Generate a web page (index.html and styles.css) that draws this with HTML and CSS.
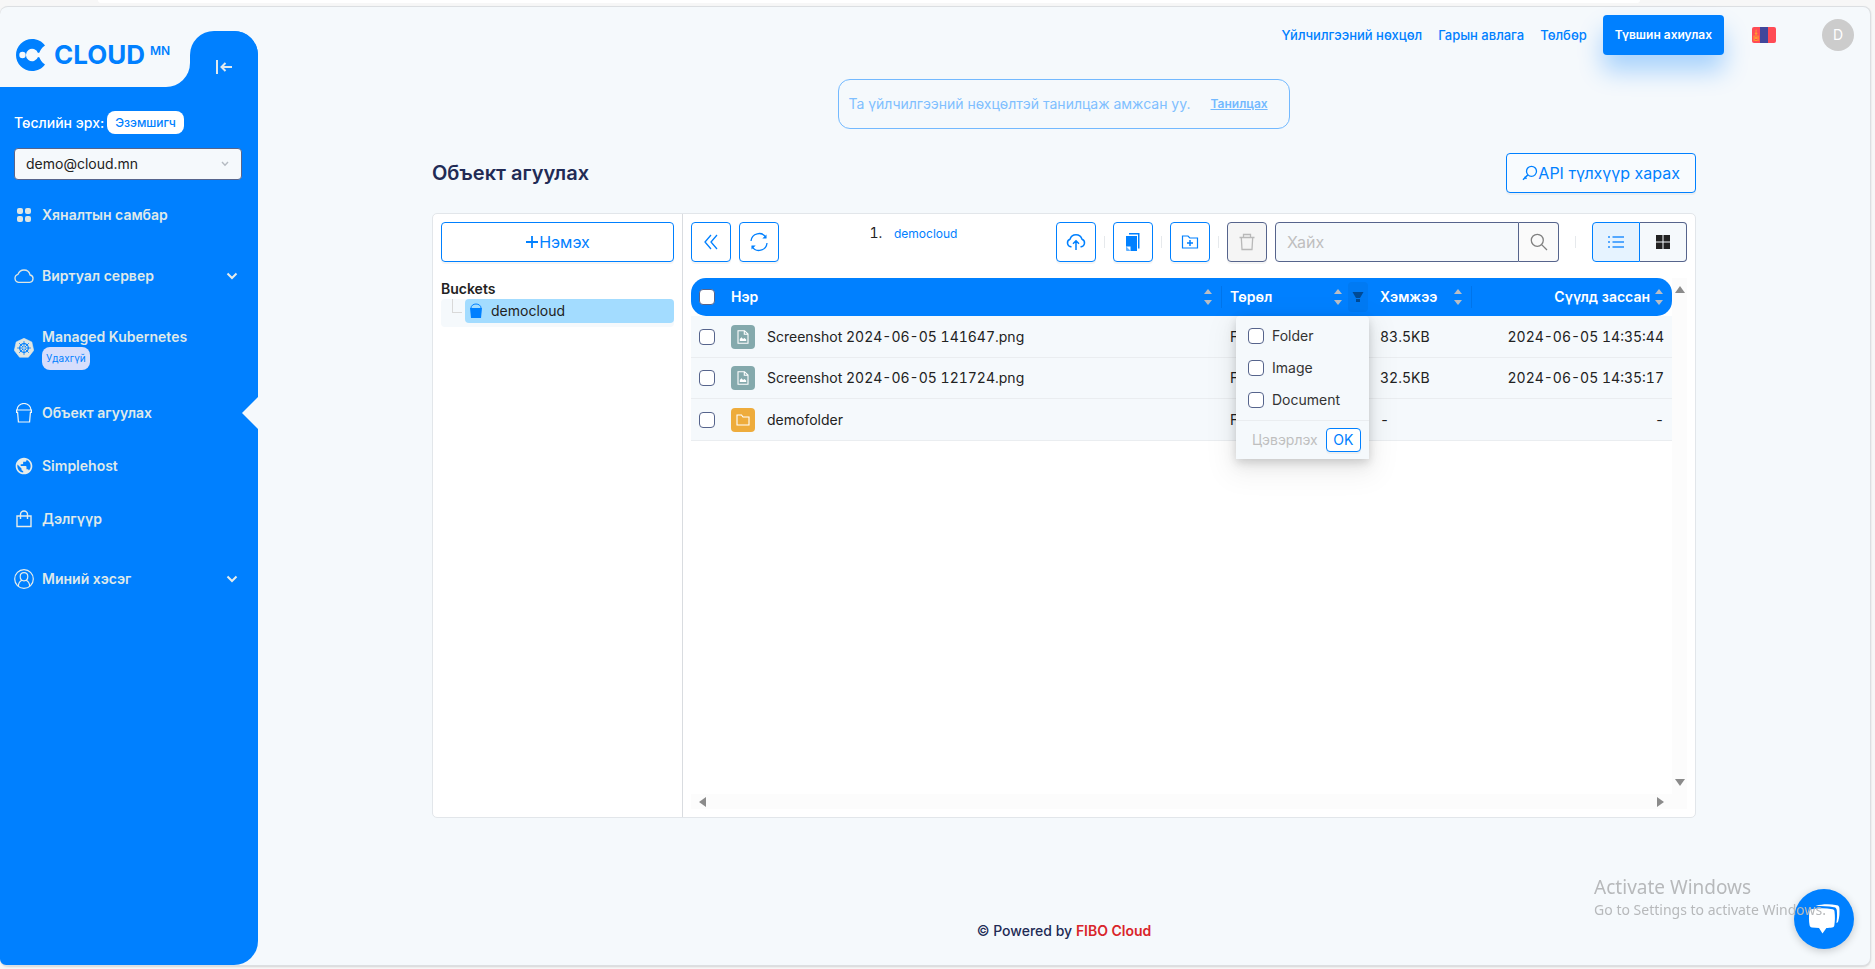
FILE: index.html
```html
<!DOCTYPE html>
<html lang="mn">
<head>
<meta charset="utf-8">
<title>Объект агуулах</title>
<link rel="stylesheet" href="styles.css">
</head>
<body>
<div class="tabstrip"><div class="addressbar"></div></div>
<div class="window">
  <aside class="sidebar">
    <div class="sidebar-top">
      <a class="logo" href="#">
        <svg width="30" height="32" viewBox="0 0 30 32"><path d="M16 0a16 16 0 1 0 0 32c5.500 0 10-2.200 13-6.500-3.500-2-5-5.500-5.500-7l-1.500-.5a6.200 6.200 0 1 1 0-4l1.500-.5c.5-1.500 2-5 5.500-7C26 2.200 21.500 0 16 0z" fill="#0080ff"/><circle cx="6.500" cy="16" r="3.200" fill="#f5f9fc"/></svg>
        <span class="logo-name">CLOUD</span><sup class="logo-mn">MN</sup>
      </a>
      <button class="collapse" aria-label="Хураах">
        <svg width="18" height="16" viewBox="0 0 18 16" fill="none" stroke="#dfe9ee" stroke-width="2"><path d="M2 1v14M17 8H6.500M10.500 4L6.500 8l4 4"/></svg>
      </button>
    </div>
    <div class="sidebar-body">
      <div class="role"><span>Төслийн эрх:</span><span class="role-tag">Эзэмшигч</span></div>
      <div class="project">
        <select aria-label="Төсөл"><option>demo@cloud.mn</option></select>
        <svg class="project-arrow" width="8" height="6" viewBox="0 0 8 6" fill="none" stroke="#b5bbc2" stroke-width="1.400"><path d="M1 1l3 3.200L7 1"/></svg>
      </div>
      <nav class="menu">
        <a class="item" href="#">
          <svg width="20" height="20" viewBox="0 0 20 20" fill="#dfe6e2"><rect x="3" y="3" width="6" height="6" rx="2"/><rect x="11" y="3" width="6" height="6" rx="2"/><rect x="3" y="11" width="6" height="6" rx="2"/><rect x="11" y="11" width="6" height="6" rx="2"/></svg>
          <span>Хяналтын самбар</span>
        </a>
        <a class="item item-tall" href="#">
          <svg width="20" height="20" viewBox="0 0 20 20" fill="none" stroke="#dfe6e2" stroke-width="1.300"><path d="M4.500 16.300h11.200a3.700 3.700 0 0 0 .4-7.300c-.7-3-3.200-5-6.100-5-2.700 0-5 1.600-6 4.300a4.100 4.100 0 0 0 .5 8z"/></svg>
          <span>Виртуал сервер</span>
          <svg class="chev" width="12" height="8" viewBox="0 0 12 8" fill="none" stroke="#e6ecea" stroke-width="2"><path d="M1.500 1.500L6 6l4.500-4.500"/></svg>
        </a>
        <a class="item item-tall" href="#">
          <svg width="20" height="20" viewBox="0 0 20 20"><path d="M10 .3l7.800 3.700L19.700 12.400 14.400 19.200H5.600L.3 12.400 2.200 4z" fill="#dfe6e2" stroke="#dfe6e2" stroke-linejoin="round" stroke-width=".6"/><g fill="none" stroke="#0080ff"><circle cx="10" cy="10" r="4.300" stroke-width="1.200"/><path d="M10 3.200v13.600M3.200 10h13.600M5.200 5.200l9.600 9.600M14.800 5.200l-9.600 9.600" stroke-width=".9"/></g><circle cx="10" cy="10" r="1" fill="#dfe6e2"/></svg>
          <span class="stack"><span>Managed Kubernetes</span><span class="soon">Удахгүй</span></span>
        </a>
        <a class="item active" href="#">
          <svg width="20" height="20" viewBox="0 0 20 20" fill="none" stroke="#f4f7f6" stroke-width="1.200"><path d="M2.600 7h14.800v2.400h-1L15.600 19H4.400L3.600 9.400h-1zM3 7a7 6.500 0 0 1 14 0"/></svg>
          <span>Объект агуулах</span>
        </a>
        <a class="item" href="#">
          <svg width="20" height="20" viewBox="0 0 24 24" fill="#e6ecea"><path d="M12 2C6.480 2 2 6.480 2 12s4.480 10 10 10 10-4.480 10-10S17.520 2 12 2zm-1 17.930c-3.950-.49-7-3.850-7-7.930 0-.62.080-1.210.21-1.790L9 15v1c0 1.100.9 2 2 2v1.930zm6.900-2.540c-.26-.81-1-1.390-1.900-1.390h-1v-3c0-.55-.45-1-1-1H8v-2h2c.55 0 1-.45 1-1V7h2c1.100 0 2-.9 2-2v-.41c2.930 1.190 5 4.060 5 7.410 0 2.080-.8 3.970-2.100 5.390z"/></svg>
          <span>Simplehost</span>
        </a>
        <a class="item" href="#">
          <svg width="20" height="20" viewBox="0 0 20 20" fill="none" stroke="#e6ecea" stroke-width="1.400"><path d="M3 7h14v10.500H3zM6.500 10V5.500a3.500 3.500 0 0 1 7 0V10"/></svg>
          <span>Дэлгүүр</span>
        </a>
        <a class="item item-tall" href="#">
          <svg width="20" height="20" viewBox="0 0 20 20" fill="none" stroke="#e6ecea" stroke-width="1.200"><circle cx="10" cy="10" r="9.300"/><path d="M10 11.800c-2.300 0-3.800-1.800-3.800-4.200S7.700 3.600 10 3.600s3.800 1.600 3.800 4-1.500 4.200-3.800 4.200zM4.300 17.200c.2-3 1.300-4.800 3.500-5.900M15.700 17.200c-.2-3-1.300-4.800-3.500-5.900"/></svg>
          <span>Миний хэсэг</span>
          <svg class="chev" width="12" height="8" viewBox="0 0 12 8" fill="none" stroke="#e6ecea" stroke-width="2"><path d="M1.500 1.500L6 6l4.500-4.500"/></svg>
        </a>
      </nav>
    </div>
  </aside>

  <main class="main">
    <header class="topbar">
      <a href="#">Үйлчилгээний нөхцөл</a>
      <a href="#">Гарын авлага</a>
      <a href="#">Төлбөр</a>
      <button class="upgrade">Түвшин ахиулах</button>
      <svg class="flag" width="24" height="16" viewBox="0 0 24 16"><rect width="24" height="16" rx="2" fill="#ff4b55"/><path d="M8 0h8v16H8z" fill="#41479b"/><g fill="#ff9b2e"><path d="M1.500 8.500h1.200V14H1.500zM5.500 8.500h1.200V14H5.500zM3 8.500h2.200v.9H3zM3 10h2.200v2H3zM3 13h2.200v1H3z"/><circle cx="4.100" cy="6.500" r="1.300"/><path d="M4.100 2l.9 2.400H3.200z"/></g></svg>
      <span class="avatar">D</span>
    </header>

    <div class="notice"><span>Та үйлчилгээний нөхцөлтэй танилцаж амжсан уу.</span><a href="#">Танилцах</a></div>

    <div class="heading">
      <h1>Объект агуулах</h1>
      <button class="btn api"><svg width="16" height="16" viewBox="0 0 16 16" fill="none" stroke="#0080ff"><circle cx="9.500" cy="6.300" r="5" stroke-width="1.300"/><path d="M5.800 9.900L1 14.700M2.500 11.800l2 2" stroke-width="1.500"/></svg>API түлхүүр харах</button>
    </div>

    <section class="card">
      <div class="buckets">
        <button class="btn"><svg width="14" height="14" viewBox="0 0 14 14" stroke="#0080ff" stroke-width="1.800"><path d="M7 1v12M1 7h12"/></svg>Нэмэх</button>
        <h2>Buckets</h2>
        <div class="tree">
          <span class="branch"></span>
          <button class="node">
            <svg width="14" height="16" viewBox="0 0 14 16"><path d="M2 5a5 4 0 0 1 10 0" fill="none" stroke="#0080ff"/><path d="M1 5h12l-1 10H2z" fill="#0080ff"/></svg>
            <span>democloud</span>
          </button>
        </div>
      </div>

      <div class="files">
        <div class="toolbar">
          <button class="btn square" aria-label="Буцах"><svg width="16" height="18" viewBox="0 0 16 18" fill="none" stroke="#0080ff" stroke-width="1.300"><path d="M8 2L2 9l6 7M14 2L8 9l6 7"/></svg></button>
          <button class="btn square" aria-label="Шинэчлэх"><svg width="20" height="20" viewBox="0 0 20 20" fill="none" stroke="#0080ff" stroke-width="1.300"><path d="M2 9a8.100 8.100 0 0 1 15-3.500M18 11a8.100 8.100 0 0 1-15 3.500"/><path d="M17.500 2.500v4h-4.200zM2.500 17.500v-4h4.200z" fill="#0080ff" stroke="none"/></svg></button>
          <ol class="crumbs"><li><a href="#">democloud</a></li></ol>
          <button class="btn square" aria-label="Хуулах"><svg width="20" height="18" viewBox="0 0 20 18" fill="none" stroke="#0080ff" stroke-width="1.500"><path d="M5.500 13.700H4.800A3.900 3.900 0 0 1 4 6.200a6.300 6.300 0 0 1 12 0 3.900 3.900 0 0 1-.8 7.500h-.7M10 17V8M7 10.700l3-3 3 3"/></svg></button>
          <span class="sep"></span>
          <button class="btn square" aria-label="Хуулбарлах"><svg width="16" height="20" viewBox="0 0 16 20" fill="#0080ff"><path d="M4 1h10.500v15.500H13V2.500H4z"/><path d="M1 4h11v15H5.500L1 14.500z"/><path d="M1 14.500h4.500V19z" fill="#fff"/><path d="M1 14.500L5.500 19H2a1 1 0 0 1-1-1z" fill="#62b1ff"/></svg></button>
          <span class="sep"></span>
          <button class="btn square" aria-label="Хавтас нэмэх"><svg width="18" height="16" viewBox="0 0 18 16" fill="none" stroke="#0080ff"><path d="M1.500 2H7l1.800 2h7.700v10h-15z" stroke-width="1.200"/><path d="M9 6v6M6 9h6" stroke-width="1.500"/></svg></button>
          <span class="sep"></span>
          <button class="btn square off" disabled aria-label="Устгах"><svg width="18" height="18" viewBox="0 0 18 18" fill="none" stroke="#b9b9b9" stroke-width="1.300"><path d="M1.500 4.500h15M5.500 4.500v-3h7v3M3.300 4.500L4 16.500h10l.7-12"/></svg></button>
          <div class="search">
            <input type="text" placeholder="Хайх" aria-label="Хайх">
            <button aria-label="Хайлт"><svg width="18" height="18" viewBox="0 0 18 18" fill="none" stroke="#808080" stroke-width="1.300"><circle cx="7.300" cy="7.300" r="6"/><path d="M11.600 11.600l5.400 5.400"/></svg></button>
          </div>
          <span class="sep sep-wide"></span>
          <div class="views">
            <button class="on" aria-label="Жагсаалт"><svg width="16" height="14" viewBox="0 0 16 14" fill="none" stroke="#2490ff" stroke-width="1.400"><path d="M4.500 2H16M4.500 7H16M4.500 12H16M0 2h2M0 7h2M0 12h2"/></svg></button>
            <button aria-label="Тор"><svg width="14" height="14" viewBox="0 0 14 14" fill="#222"><path d="M0 0h6.500v6.500H0zM7.500 0H14v6.500H7.500zM0 7.500h6.500V14H0zM7.500 7.500H14V14H7.500z"/></svg></button>
          </div>
        </div>

        <div class="grid-view">
          <div class="table-area">
            <table>
              <colgroup><col class="c-check"><col><col class="c-type"><col class="c-size"><col class="c-date"></colgroup>
              <thead>
                <tr>
                  <th class="check"><input type="checkbox" aria-label="Бүгдийг сонгох"></th>
                  <th><div class="th split"><span>Нэр</span><i class="sorter"></i></div></th>
                  <th class="type"><div class="th th-type"><span>Төрөл</span><i class="sorter"></i>
                    <button class="filter" aria-label="Шүүх"><svg width="12" height="12" viewBox="0 0 12 12" fill="#004a94"><path d="M.5 1h11L8 7H4zM4 8h4v3H4z"/></svg></button></div>
                    <div class="filter-menu">
                      <div class="filter-list">
                        <label><input type="checkbox">Folder</label>
                        <label><input type="checkbox">Image</label>
                        <label><input type="checkbox">Document</label>
                      </div>
                      <div class="filter-foot"><button class="clear" disabled>Цэвэрлэх</button><button class="ok">OK</button></div>
                    </div>
                  </th>
                  <th><div class="th th-size split"><span>Хэмжээ</span><i class="sorter"></i></div></th>
                  <th><div class="th th-date"><span>Сүүлд зассан</span><i class="sorter"></i></div></th>
                </tr>
              </thead>
              <tbody>
                <tr>
                  <td class="check"><input type="checkbox" aria-label="Сонгох"></td>
                  <td><div class="file"><span class="kind"><svg width="12" height="14" viewBox="0 0 12 14" fill="none" stroke="#fff" stroke-width="1.100"><path d="M1 .7h6.500L11 4v9.300H1zM7.300.7v3.500H11"/><path d="M2.800 11V9l1.700-1.700L6 9l1.500-1L9.200 9.600V11z" fill="#fff" stroke="none"/></svg></span>Screenshot 2024-06-05 141647.png</div></td>
                  <td>File</td><td>83.5KB</td><td class="right">2024-06-05 14:35:44</td>
                </tr>
                <tr>
                  <td class="check"><input type="checkbox" aria-label="Сонгох"></td>
                  <td><div class="file"><span class="kind"><svg width="12" height="14" viewBox="0 0 12 14" fill="none" stroke="#fff" stroke-width="1.100"><path d="M1 .7h6.500L11 4v9.300H1zM7.300.7v3.500H11"/><path d="M2.800 11V9l1.700-1.700L6 9l1.500-1L9.200 9.600V11z" fill="#fff" stroke="none"/></svg></span>Screenshot 2024-06-05 121724.png</div></td>
                  <td>File</td><td>32.5KB</td><td class="right">2024-06-05 14:35:17</td>
                </tr>
                <tr>
                  <td class="check"><input type="checkbox" aria-label="Сонгох"></td>
                  <td><div class="file"><span class="kind folder"><svg width="14" height="12" viewBox="0 0 14 12" fill="none" stroke="#fff" stroke-width="1.100"><path d="M1 1h4.500L7 3h6v8H1z"/></svg></span>demofolder</div></td>
                  <td>Folder</td><td>-</td><td class="right">-</td>
                </tr>
              </tbody>
            </table>
          </div>
          <div class="vbar"><i class="up"></i><i class="down"></i></div>
          <div class="hbar"><i class="left"></i><i class="next"></i></div>
        </div>
      </div>
    </section>

    <footer>© Powered by <a href="#">FIBO Cloud</a></footer>
  </main>
</div>
<button class="chat" aria-label="Чат"><svg width="32" height="32" viewBox="0 0 32 32" fill="#fff"><path d="M7.500 2.800C15 .8 22 .8 29 2.300c1.500.3 2.300 1.300 2.400 2.700.3 4.500.2 9-1.200 13.200-.3 1-1 1.500-1.800 1.700.7-4.300.9-8.400.4-12.600-.2-1.800-1-2.800-2.800-3.100-6-.9-12-1-18.500-1.400z"/><path d="M3.500 6.300c7-1.300 14-1.300 21 0 1.200.2 1.900 1 2 2.100.6 5 .6 9.500-.2 14-.2 1.200-1 1.900-2.200 2-2.200.3-3.700.4-5.700.5L14.500 30.500 11 25c-2.500-.1-4.500-.2-7-.5-1.400-.2-2.200-.9-2.400-2.200-.8-4.700-.8-9-.2-13.900.2-1.100.9-1.900 2.100-2.100z"/></svg></button>
<div class="watermark"><p class="wm-title">Activate Windows</p><p>Go to Settings to activate Windows.</p></div>
</body>
</html>
```
FILE: styles.css
```css
* { box-sizing: border-box; }
body {
  margin: 0;
  min-height: 100vh;
  display: flex;
  flex-direction: column;
  background: #f7f7f7;
  color: #222;
  font: 14px/20px Inter, "Open Sans", sans-serif;
}
button, input, select { font: inherit; color: inherit; margin: 0; }
button { padding: 0; display: flex; align-items: center; justify-content: center; cursor: pointer; }
a { text-decoration: none; color: #0080ff; }
h1, h2, p, ol { margin: 0; padding: 0; }
svg { flex: none; display: block; }

.tabstrip { height: 6px; }
.addressbar { height: 3px; margin: 0 235px 0 98px; background: #fff; border-radius: 0 0 8px 8px; }
.window {
  flex: 1;
  display: flex;
  margin: 0 4px 3px 0;
  background: #f5f9fc;
  border: 1px solid #dcdfe2;
  border-left: 0;
  border-radius: 8px;
  box-shadow: 0 1px 2px #0002;
}

/* Sidebar */
.sidebar {
  width: 258px;
  flex: none;
  margin-top: 24px;
  background: #0080ff;
  border-radius: 0 24px 24px 6px;
}
.sidebar-top {
  display: flex;
  height: 56px;
  background: linear-gradient(#f5f9fc, #f5f9fc) 0 0 / 214px 28px no-repeat;
}
.logo {
  flex: 1;
  display: flex;
  align-items: center;
  padding: 0 0 8px 16px;
  background: #f5f9fc;
  border-radius: 0 0 24px 0;
}
.logo-name { margin-left: 8px; font-size: 26px; font-weight: 700; line-height: 32px; }
.logo-mn { margin: 0 0 8px 5px; font-size: 12px; font-weight: 600; line-height: 12px; }
.collapse { width: 68px; border: 0; border-radius: 24px 24px 0 0; background: #0080ff; padding-top: 16px; }
.sidebar-body { padding: 24px 0 16px 14px; }
.role { display: flex; align-items: center; gap: 3px; color: #fff; font-weight: 500; }
.role-tag { padding: 0 8px; height: 23px; line-height: 23px; border-radius: 8px; background: #fff; color: #0080ff; font-size: 12px; }
.project { position: relative; margin: 14px 16px 18px 0; }
.project select {
  display: block;
  width: 100%;
  height: 32px;
  padding: 0 11px;
  appearance: none;
  border: 1px solid #56648c;
  border-radius: 4px;
  background: #f5f9fc;
}
.project-arrow { position: absolute; right: 13px; top: 13px; }
.menu { display: flex; flex-direction: column; }
.item {
  position: relative;
  display: flex;
  align-items: center;
  gap: 8px;
  height: 53px;
  padding-right: 20px;
  color: #dfe9ea;
  font-weight: 600;
}
.item:first-child { height: 34px; margin-bottom: 10px; }
.item-tall { height: 68px; }
.item-tall + .item-tall { height: 76px; }
.chev { margin-left: auto; }
.stack { display: flex; flex-direction: column; align-items: flex-start; }
.soon { padding: 0 4px; height: 23px; line-height: 23px; border-radius: 8px; background: #d6defc; color: #0080ff; font-size: 10px; font-weight: 400; }
.active::after { content: ""; position: absolute; right: 0; border: 16px solid transparent; border-left: 0; border-right-color: #f5f9fc; }

/* Main column */
.main { flex: 1; min-width: 0; display: flex; flex-direction: column; }
.topbar { display: flex; align-items: center; justify-content: flex-end; gap: 16px; height: 56px; padding-right: 16px; font-size: 13px; font-weight: 500; }
.upgrade { height: 40px; padding: 0 12px; border: 0; border-radius: 4px; background: #0080ff; color: #fff; font-size: 12px; font-weight: 600; box-shadow: 0 16px 24px #0080ff50; }
.flag { margin-left: 12px; }
.avatar { margin-left: 30px; width: 32px; height: 32px; line-height: 32px; border-radius: 50%; text-align: center; background: #ccc; color: #fff; font-size: 14px; font-weight: 400; }
.notice {
  align-self: center;
  display: flex;
  align-items: center;
  gap: 20px;
  height: 50px;
  margin-top: 16px;
  padding: 0 21px 0 9px;
  border: 1px solid #73b9ff;
  border-radius: 12px;
  color: #80bfff;
}
.notice a { color: #73b9ff; font-size: 12px; font-weight: 600; text-decoration: underline; }
.heading { display: flex; align-items: center; justify-content: space-between; margin: 24px 174px 20px; }
h1 { font-size: 20px; line-height: 28px; font-weight: 600; color: #222b55; }
.btn { height: 40px; border: 1px solid #0080ff; border-radius: 4px; background: #fff; color: #0080ff; font-size: 16px; box-shadow: 0 2px 0 #0000000a; }
.api { padding: 0 15px; background: #f8fbfe; }
.square { width: 40px; flex: none; }
.off { border-color: #56648c; background: #f5f5f5; }
.card { flex: 1; display: flex; margin: 0 174px; background: #fff; border: 1px solid #e2e6ea; border-radius: 5px; }
.buckets { width: 250px; flex: none; padding: 8px; border-right: 1px solid #d9dce0; display: flex; flex-direction: column; }
h2 { margin-top: 17px; font-size: 14px; line-height: 20px; font-weight: 600; }
.tree { display: flex; background: #f5f9fc; padding-bottom: 4px; border-radius: 4px; }
.branch { width: 10px; height: 14px; margin: 0 3px 0 11px; border: solid #d9d9d9; border-width: 0 0 1px 1px; }
.node { flex: 1; justify-content: flex-start; gap: 8px; height: 24px; padding: 0 4px; border: 0; border-radius: 4px; background: #a3dcff; }
.files { flex: 1; min-width: 0; display: flex; flex-direction: column; gap: 16px; padding: 8px; }

/* Toolbar */
.toolbar { display: flex; align-items: center; gap: 8px; }
.crumbs { flex: 1; align-self: flex-start; padding-left: 99px; font-size: 14px; line-height: 22px; }
.crumbs a { padding: 0 8px; font-size: 12px; }
.sep { width: 1px; height: 12px; background: #e6e9ec; }
.sep-wide { margin: 0 8px; }
.search { display: flex; width: 284px; }
.search input { flex: 1; min-width: 0; height: 40px; padding: 0 11px; border: 1px solid #56648c; border-radius: 4px 0 0 4px; background: #f5f9fc; font-size: 16px; }
.search input::placeholder { color: #bfbfbf; }
.search button { width: 40px; border: 1px solid #56648c; border-left: 0; border-radius: 0 4px 4px 0; background: #fafafa; }
.views { display: flex; }
.views button { width: 47px; height: 40px; border: 1px solid #56648c; border-left: 0; border-radius: 0 4px 4px 0; background: #f5f9fc; }
.views .on { width: 48px; border: 1px solid #0080ff; border-radius: 4px 0 0 4px; background: #e6f3ff; }

/* File table */
.grid-view { flex: 1; display: grid; grid-template: 1fr 15px / 1fr 15px; }
.vbar, .hbar { display: flex; justify-content: space-between; align-items: center; background: #fcfcfc; }
.vbar { flex-direction: column; padding: 8px 0; }
.hbar { grid-column: 1 / 3; padding: 0 23px 0 8px; }
.up, .down { border: 5px solid transparent; }
.up { border-top: 0; border-bottom: 7px solid #8b8b8b; }
.down { border-bottom: 0; border-top: 7px solid #8b8b8b; }
.left, .next { border: 5px solid transparent; }
.left { border-left: 0; border-right: 7px solid #8b8b8b; }
.next { border-right: 0; border-left: 7px solid #8b8b8b; }
table { width: 100%; table-layout: fixed; border-spacing: 0; font-feature-settings: "tnum"; }
.c-check { width: 32px; }
.c-type { width: 150px; }
.c-size { width: 100px; }
.c-date { width: 200px; }
th { position: relative; height: 38px; padding: 0; background: #0080ff; text-align: left; font-weight: 600; }
th:first-child { border-radius: 15px 0 0 15px; }
th:last-child { border-radius: 0 15px 15px 0; }
.th { display: flex; align-items: center; padding: 0 10px 0 8px; color: #fff; }
.split { justify-content: space-between; border-right: 1px solid #0074ea; height: 22px; padding-right: 9px; }
.th-type { padding-right: 4px; }
.th-type .sorter { margin: 0 6px 0 auto; }
.th-date { justify-content: flex-end; gap: 5px; padding: 0 9px 0 0; }
.sorter { display: flex; flex-direction: column; gap: 6px; }
.sorter::before, .sorter::after { content: ""; border: 4px solid transparent; }
.sorter::before { border-top: 0; border-bottom: 5px solid #b9bdc4; }
.sorter::after { border-bottom: 0; border-top: 5px solid #b9bdc4; }
.filter { width: 20px; height: 30px; border: 0; border-radius: 4px; background: #007af3; }
td { height: 42px; padding: 0 8px; background: #f5f9fc; border-bottom: 1px solid #eaedf0; }
tr:nth-child(even) td { height: 41px; }
.check { padding: 0 0 0 8px; }
.right { text-align: right; }
.file { display: flex; align-items: center; gap: 12px; }
.kind { width: 24px; height: 24px; display: flex; align-items: center; justify-content: center; border-radius: 4px; background: #84a9ac; }
.folder { background: #eeac3c; }
input[type="checkbox"] { appearance: none; display: block; flex: none; width: 16px; height: 16px; border: 1px solid #56648c; border-radius: 4px; background: #fff; }
.filter-menu { position: absolute; z-index: 2; left: 14px; top: 100%; width: 133px; border-radius: 4px 4px 0 0; background: #f5f9fc; font-weight: 400; color: #333; box-shadow: 0 6px 16px #00000014, 0 3px 8px #0000001f, 0 9px 28px 8px #0000000d; }
.filter-list { padding: 4px 12px; }
.filter-list label { display: flex; align-items: center; gap: 8px; height: 32px; }
.filter-foot { display: flex; justify-content: space-between; padding: 7px 8px; border-top: 1px solid #eaedf0; }
.clear { padding: 0 8px; border: 0; background: none; color: #bfbfbf; }
.ok { width: 36px; height: 24px; border: 1px solid #0080ff; border-radius: 4px; background: #fff; color: #0080ff; box-shadow: 0 2px 0 #0000000a; }

footer { padding: 103px 0 24px; text-align: center; font-weight: 500; color: #222b55; }
footer a { color: #d9252a; font-weight: 600; }

/* Floating over the page */
.chat { position: fixed; right: 21px; bottom: 20px; width: 60px; height: 60px; border: 0; border-radius: 50%; background: #0080ff; box-shadow: 0 2px 8px #0003; }
.watermark { position: fixed; right: 49px; bottom: 49px; color: #b7b9bb; font: 14px/20px "Noto Sans", "Open Sans", sans-serif; pointer-events: none; }
.wm-title { font-size: 19px; line-height: 26px; }
```
